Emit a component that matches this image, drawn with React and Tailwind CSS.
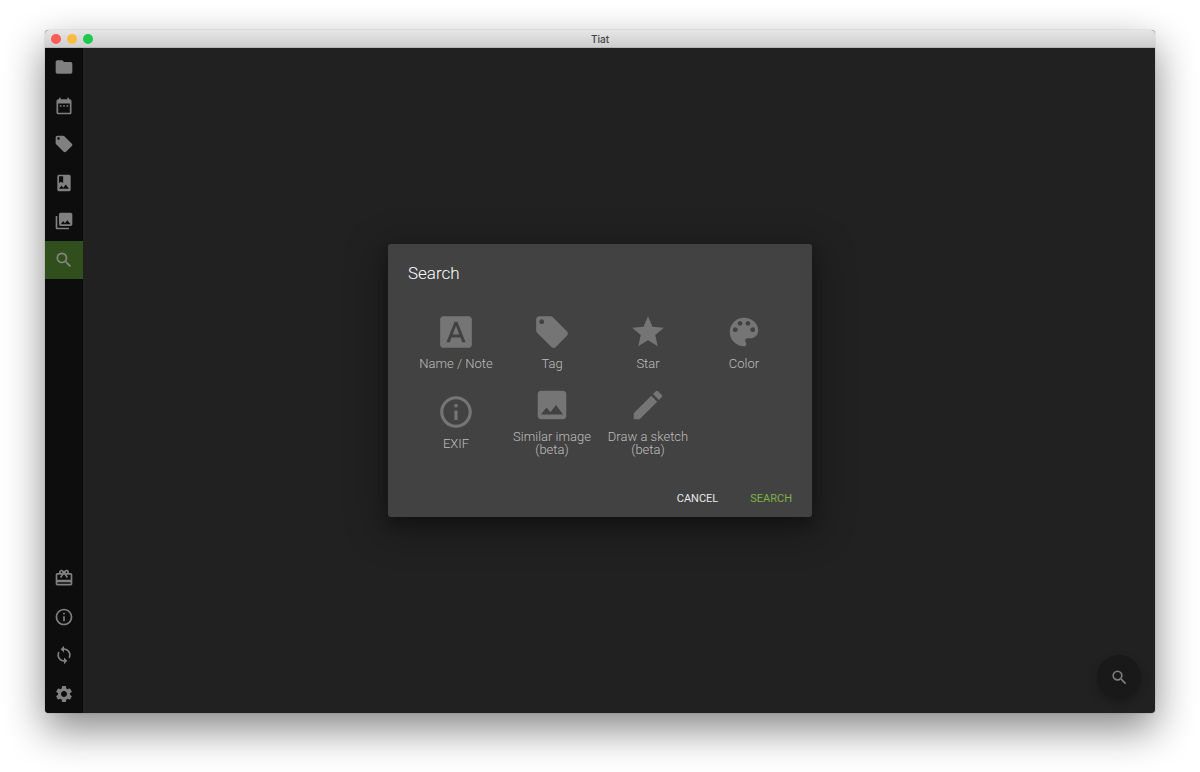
import React from "react";
import {
  MdFolder,
  MdDateRange,
  MdLocalOffer,
  MdPhotoLibrary,
  MdSearch,
  MdCardGiftcard,
  MdInfoOutline,
  MdSync,
  MdSettings,
  MdFontDownload,
  MdStar,
  MdColorLens,
  MdImage,
  MdEdit,
} from "react-icons/md";

function AlbumIcon({ className }) {
  return (
    <svg viewBox="0 0 24 24" fill="currentColor" aria-hidden="true" className={className}>
      <path d="M6 19L9 15.14L11.14 17.72L14.14 13.86L18 19H6M6 4H11V12L8.5 10.5L6 12M18 2H6A2 2 0 0 0 4 4V20A2 2 0 0 0 6 22H18A2 2 0 0 0 20 20V4A2 2 0 0 0 18 2Z" />
    </svg>
  );
}

const mainNav = [
  { label: "Folders", icon: MdFolder },
  { label: "Calendar", icon: MdDateRange },
  { label: "Tags", icon: MdLocalOffer },
  { label: "Albums", icon: AlbumIcon },
  { label: "Library", icon: MdPhotoLibrary },
  { label: "Search", icon: MdSearch, active: true },
];

const footerNav = [
  { label: "Gift", icon: MdCardGiftcard },
  { label: "About", icon: MdInfoOutline },
  { label: "Sync", icon: MdSync },
  { label: "Settings", icon: MdSettings },
];

const criteria = [
  { lines: ["Name / Note"], icon: MdFontDownload },
  { lines: ["Tag"], icon: MdLocalOffer },
  { lines: ["Star"], icon: MdStar },
  { lines: ["Color"], icon: MdColorLens },
  { lines: ["EXIF"], icon: MdInfoOutline },
  { lines: ["Similar image", "(beta)"], icon: MdImage },
  { lines: ["Draw a sketch", "(beta)"], icon: MdEdit },
];

function NavButton({ item }) {
  const Icon = item.icon;
  return (
    <button
      type="button"
      aria-label={item.label}
      className={
        item.active
          ? "flex items-center justify-center bg-[#304f1d] text-[#858585]"
          : "flex items-center justify-center text-[#808080]"
      }
    >
      <Icon className="size-5" />
    </button>
  );
}

function TitleBar() {
  return (
    <header className="grid h-[18px] grid-cols-3 items-center border-b border-[#b5b5b5] bg-linear-to-b from-[#e6e6e6] to-[#cecece] px-1.5">
      <div className="flex gap-1.5">
        <button type="button" aria-label="Close" className="size-2.5 rounded-full bg-[#fc5b57]" />
        <button type="button" aria-label="Minimize" className="size-2.5 rounded-full bg-[#fdbc40]" />
        <button type="button" aria-label="Zoom" className="size-2.5 rounded-full bg-[#1fc950]" />
      </div>
      <h1 className="text-center font-['Inter',sans-serif] text-[10px] leading-none font-medium text-[#444444]">Tiat</h1>
    </header>
  );
}

function SearchDialog() {
  return (
    <section
      role="dialog"
      aria-labelledby="search-title"
      className="w-[424px] rounded-[3px] bg-[#424242] px-5 pt-[19px] pb-1 shadow-[0_9px_37px_7px_rgba(0,0,0,0.3),0_8px_12px_rgba(0,0,0,0.2)]"
    >
      <h2 id="search-title" className="text-[17px] leading-5 font-light text-white">Search</h2>
      <div className="mt-[18px] grid auto-rows-[80px] grid-cols-4">
        {criteria.map(({ lines, icon: Icon }) => (
          <button
            key={lines[0]}
            type="button"
            className="flex flex-col items-center justify-center text-[13px] leading-[13px] font-light text-[#bdbdbd]"
          >
            <Icon className="mb-1.5 size-[38px] text-[#757575]" />
            {lines.map((line) => (
              <span key={line} className="whitespace-nowrap">{line}</span>
            ))}
          </button>
        ))}
      </div>
      <div className="mt-6 flex justify-end gap-8">
        <button type="button" className="h-7 text-[11px] font-normal text-[#e8e8e8]">CANCEL</button>
        <button type="button" className="h-7 text-[11px] font-normal text-[#7cb342]">SEARCH</button>
      </div>
    </section>
  );
}

export default function App() {
  return (
    <div className="flex min-h-screen flex-col bg-white px-[45px] pt-[30px] pb-[59px] font-['Roboto',sans-serif]">
      <div className="flex flex-1 flex-col overflow-hidden rounded-[4px] bg-[#212121] shadow-[0_0_1px_rgba(0,0,0,0.5),0_16px_40px_rgba(0,0,0,0.48)]">
        <TitleBar />
        <div className="relative flex flex-1">
          <nav className="flex w-[38px] flex-col justify-between bg-[#0d0d0d]">
            <div className="grid h-[231px] grid-rows-6">
              {mainNav.map((item) => (
                <NavButton key={item.label} item={item} />
              ))}
            </div>
            <div className="grid h-[154px] grid-rows-4">
              {footerNav.map((item) => (
                <NavButton key={item.label} item={item} />
              ))}
            </div>
          </nav>
          <main className="flex flex-1 items-end justify-end p-3.5">
            <button
              type="button"
              aria-label="New search"
              className="flex size-11 items-center justify-center rounded-full bg-[#191919] text-[#7d7d7d] shadow-[0_4px_8px_rgba(0,0,0,0.25)]"
            >
              <MdSearch className="size-[19px]" />
            </button>
          </main>
          <div className="absolute inset-0 flex items-center justify-center">
            <SearchDialog />
          </div>
        </div>
      </div>
    </div>
  );
}
